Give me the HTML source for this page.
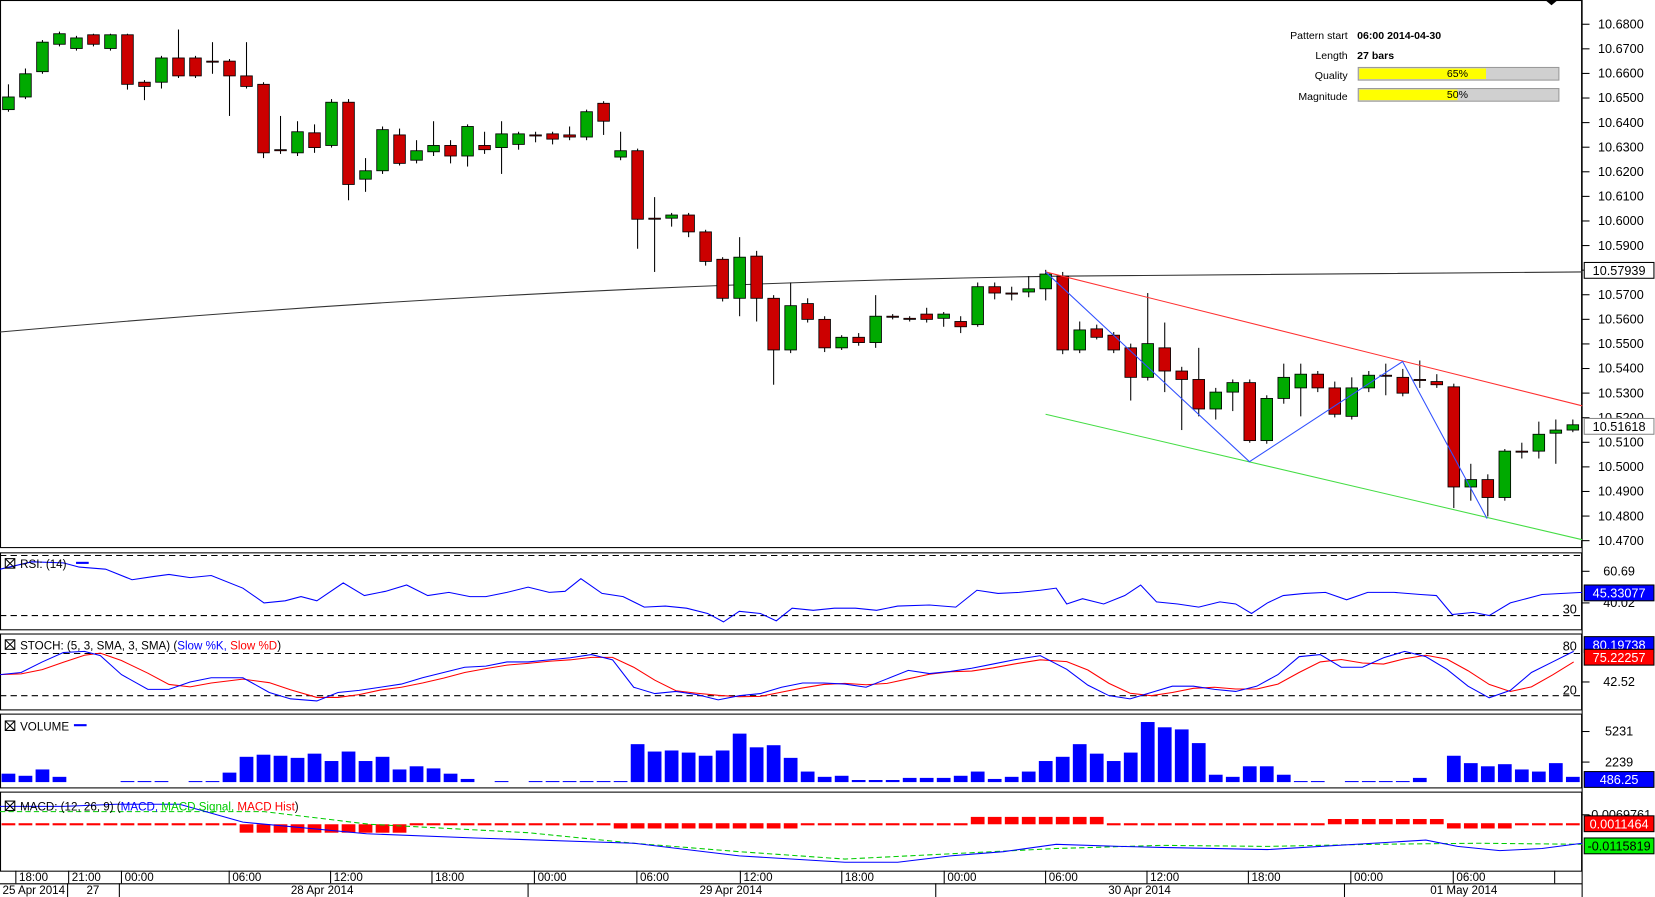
<!DOCTYPE html>
<html><head><meta charset="utf-8">
<style>
html,body{margin:0;padding:0;background:#fff;overflow:hidden}
svg{display:block;font-family:"Liberation Sans",Arial,sans-serif}
</style></head><body>
<svg id="c" width="1655" height="897" viewBox="0 0 1567 851" preserveAspectRatio="none" xmlns="http://www.w3.org/2000/svg">
<rect width="1567" height="851" fill="#fff"/>
<g id="g"></g>
<g font-size="10" fill="#000">
<text x="1276" y="37" text-anchor="end">Pattern start</text><text x="1285" y="37" font-weight="bold">06:00 2014-04-30</text>
<text x="1276" y="56" text-anchor="end">Length</text><text x="1285" y="56" font-weight="bold">27 bars</text>
<text x="1276" y="75" text-anchor="end">Quality</text>
<text x="1276" y="95" text-anchor="end">Magnitude</text>
</g>
<rect x="1286" y="64" width="190" height="12" fill="#d0d0d0" stroke="#999"/>
<rect x="1287" y="65" width="120" height="10" fill="#ffff00"/>
<text x="1380" y="73" font-size="10" text-anchor="middle">65%</text>
<rect x="1286" y="84" width="190" height="12" fill="#d0d0d0" stroke="#999"/>
<rect x="1287" y="85" width="93" height="10" fill="#ffff00"/>
<text x="1380" y="93" font-size="10" text-anchor="middle">50%</text>
<path d="M1463 0 L1475 0 L1469 5Z" fill="#000"/>
</svg>
<script>
const NS="http://www.w3.org/2000/svg",g=document.getElementById('g');
function el(t,a,txt){const e=document.createElementNS(NS,t);for(const k in a)e.setAttribute(k,a[k]);if(txt!=null)e.textContent=txt;g.appendChild(e);return e;}
el('rect',{x:0.5,y:0.5,width:1497,height:519,fill:'none',stroke:'#000'});
[[524,597],[601,673],[677,747],[751,826]].forEach(p=>el('rect',{x:0.5,y:p[0]+.5,width:1497,height:p[1]-p[0],fill:'none',stroke:'#000'}));
el('line',{x1:1498,y1:0,x2:1498,y2:851,stroke:'#000'});
el('line',{x1:0,y1:838.5,x2:1498,y2:838.5,stroke:'#000'});
const pl=["10.6800","10.6700","10.6600","10.6500","10.6400","10.6300","10.6200","10.6100","10.6000","10.5900","10.5800","10.5700","10.5600","10.5500","10.5400","10.5300","10.5200","10.5100","10.5000","10.4900","10.4800","10.4700"];
pl.forEach((t,i)=>{const y=23+i*23.33;el('line',{x1:1498,y1:y,x2:1505,y2:y,stroke:'#000'});el('text',{x:1513,y:y+4,'font-size':12},t);});
function box(y,txt,fill,col,stroke){el('rect',{x:1500,y:y-8,width:66,height:15,fill:fill,stroke:stroke||'#000'});el('text',{x:1533,y:y+4,'font-size':12,'text-anchor':'middle',fill:col},txt);}
box(257,"10.57939","#fff","#000");box(405,"10.51618","#fff","#000","#888");
[[542,"60.69"],[572,"40.02"],[647,"42.52"],[694,"5231"],[723,"2239"],[773,"-0.0069761"]].forEach(a=>{el('line',{x1:1498,y1:a[0],x2:1505,y2:a[0],stroke:'#000'});el('text',{x:1533,y:a[0]+4,'font-size':12,'text-anchor':'middle'},a[1]);});
el('text',{x:1493,y:582,'font-size':12,'text-anchor':'end'},"30");
el('text',{x:1493,y:617,'font-size':12,'text-anchor':'end'},"80");
el('text',{x:1493,y:659,'font-size':12,'text-anchor':'end'},"20");
box(563,"45.33077","#0000ff","#fff");box(612,"80.19738","#0000ff","#fff");box(624,"75.22257","#ff0000","#fff");
box(740,"486.25","#0000ff","#fff");box(782,"0.0011464","#ff0000","#fff");box(803,"-0.0115819","#00ee00","#000");
[527,584,620,660].forEach(y=>el('line',{x1:0,y1:y,x2:1498,y2:y,stroke:'#000','stroke-dasharray':'6,4'}));
el('path',{d:'M0 315 Q500 270 1000 262 L1498 258',fill:'none',stroke:'#333','stroke-width':1});
const C=[[92,104,80,106,1],[70,92,65,94,1],[40,68,38,70,1],[32,42,30,44,1],[36,46,34,48,1],[33,42,32,44,0],[33,46,32,48,1],[33,80,32,85,0],[78,82,76,95,0],[55,78,53,84,1],[55,72,28,74,0],[55,72,53,74,0],[58,58,40,70,0],[58,72,56,110,0],[72,82,40,84,0],[80,145,78,150,0],[142,142,110,146,0],[125,145,115,148,1],[126,140,118,145,0],[97,138,94,140,1],[97,175,94,190,0],[162,170,150,182,1],[123,162,120,165,1],[128,155,122,157,0],[143,152,133,155,1],[138,144,115,148,1],[138,148,133,155,0],[120,148,118,158,1],[138,142,125,146,0],[127,140,115,165,1],[127,137,125,142,1],[128,128,125,135,0],[127,132,125,137,0],[128,130,120,133,0],[106,130,104,133,1],[98,115,96,128,0],[143,149,125,152,1],[143,208,141,236,0],[207,207,187,258,0],[204,207,202,215,1],[204,220,202,225,0],[220,248,218,252,0],[246,283,244,286,0],[244,283,225,300,1],[243,283,238,305,0],[283,332,280,365,0],[290,332,268,335,1],[288,303,283,306,0],[303,330,300,334,0],[320,330,318,332,1],[320,325,316,328,0],[300,325,280,330,1],[300,300,298,303,0],[302,302,300,305,0],[298,303,292,306,0],[298,302,296,310,1],[305,310,300,316,0],[272,308,268,310,1],[272,278,268,284,0],[278,278,272,285,0],[274,277,262,282,1],[260,274,256,285,1],[262,332,258,336,0],[313,332,305,335,1],[312,320,308,322,0],[318,332,315,335,0],[330,358,326,380,0],[326,358,278,361,1],[330,352,306,372,0],[352,360,348,408,0],[360,388,330,395,0],[372,388,368,398,1],[363,372,360,390,1],[363,418,360,420,0],[378,418,375,421,1],[358,378,345,383,1],[355,368,345,395,1],[355,368,352,372,0],[368,393,362,396,0],[368,395,358,398,1],[356,368,352,372,1],[356,356,345,375,0],[358,373,350,376,0],[360,360,342,368,0],[362,365,355,368,0],[367,462,364,482,0],[455,462,440,475,1],[455,472,450,490,0],[428,472,426,475,1],[428,428,420,435,0],[412,428,400,435,1],[408,411,398,440,1],[403,408,398,410,1]];
const xs=i=>8+i*16.1;
C.forEach((c,i)=>{const x=xs(i);el('line',{x1:x,y1:c[2],x2:x,y2:c[3],stroke:'#000'});const t=Math.min(c[0],c[1]),h=Math.max(1,Math.abs(c[1]-c[0]));el('rect',{x:x-5.5,y:t,width:11,height:h,fill:c[4]?'#00aa00':'#cc0000',stroke:'#000','stroke-width':0.8});});
el('line',{x1:990,y1:258,x2:1498,y2:385,stroke:'#ff3030'});
el('line',{x1:990,y1:393,x2:1498,y2:512,stroke:'#44dd44'});
el('polyline',{points:'990,258 1183,438 1328,343 1408,492',fill:'none',stroke:'#3050ff'});
const rsi=[0,540,30,533,60,534,75,538,100,540,125,550,145,547,160,545,180,548,200,546,230,558,250,572,270,570,285,566,300,570,325,553,345,565,365,561,385,555,405,565,425,562,445,566,460,566,480,562,500,557,520,562,535,561,550,549,570,563,590,566,610,576,630,575,650,577,670,582,685,590,700,580,720,582,735,589,750,577,770,579,790,577,810,577,830,579,850,575,880,574,905,576,925,560,945,563,965,562,985,560,1000,558,1010,573,1025,568,1045,573,1065,565,1080,555,1095,571,1115,573,1135,576,1155,571,1170,573,1185,582,1200,572,1215,565,1235,563,1255,562,1275,569,1295,562,1320,562,1345,564,1360,565,1375,583,1395,581,1410,584,1430,572,1460,564,1498,562];
const pts=a=>{let s='';for(let i=0;i<a.length;i+=2)s+=a[i]+','+a[i+1]+' ';return s;};
el('polyline',{points:pts(rsi),fill:'none',stroke:'#0000ff'});
const K=[0,640,20,638,40,628,60,619,80,618,95,622,115,640,140,654,160,654,180,647,200,643,230,643,255,657,275,663,300,665,320,657,340,655,360,652,380,649,400,643,420,638,440,633,460,632,480,628,500,628,520,626,540,624,560,621,580,626,600,652,620,658,640,656,660,659,680,664,700,660,720,658,740,652,760,648,780,648,800,649,820,652,840,644,860,636,880,639,900,637,920,634,940,630,960,626,985,622,1010,635,1030,650,1050,660,1070,663,1090,657,1110,651,1130,651,1150,654,1170,656,1190,651,1210,640,1230,623,1250,621,1270,633,1290,633,1310,624,1330,618,1350,623,1370,635,1390,651,1410,662,1430,655,1450,638,1470,628,1490,618];
const D=[];for(let i=0;i<K.length;i+=2){const j=Math.max(0,i-2),k=Math.max(0,i-4);D.push(K[i],(K[i+1]+K[j+1]+K[k+1])/3);}
el('polyline',{points:pts(D),fill:'none',stroke:'#ff0000'});
el('polyline',{points:pts(K),fill:'none',stroke:'#0000ff'});
const V=[8,6,12,5,0,0,0,1,1,1,0,1,1,9,24,26,25,23,27,20,29,20,24,12,15,13,8,3,0,1,0,1,1,1,1,1,1,36,29,30,28,25,30,46,33,35,23,10,5,6,2,2,2,4,4,4,6,10,3,5,10,20,24,36,27,20,28,57,52,50,37,7,5,15,15,7,1,1,0,1,1,1,1,4,0,25,18,15,17,12,10,18,5];
C.forEach((c,i)=>{const h=V[i]||0;if(h>0)el('rect',{x:xs(i)-6.5,y:742-h,width:13,height:h,fill:'#0000ff'});});
C.forEach((c,i)=>{const x=xs(i);let t=781,h=2;
 if(x>230&&x<380){t=782;h=8;} else if(x>580&&x<760){t=781;h=5;} else if(x>910&&x<1050){t=775;h=7;} else if(x>1250&&x<1370){t=777;h=5;} else if(x>1370&&x<1440){t=781;h=5;}
 el('rect',{x:x-6.5,y:t,width:13,height:h,fill:'#ff0000'});});
el('polyline',{points:'0,770 250,770 350,782 500,790 600,800 700,808 800,815 900,810 1000,805 1100,802 1200,803 1300,801 1400,800 1498,801',fill:'none',stroke:'#00cc00','stroke-dasharray':'5,3'});
el('polyline',{points:'0,765 60,765 110,763 170,763 230,780 347,791 450,795 600,800 700,812 800,818 850,818 900,812 950,808 1000,801 1060,803 1100,804 1200,806 1300,800 1350,797 1380,803 1420,807 1460,805 1498,800',fill:'none',stroke:'#0000ff'});
function ttl(y,parts){el('rect',{x:5,y:y-9,width:9,height:9,fill:'none',stroke:'#000'});el('path',{d:`M5 ${y-9}l9 9M14 ${y-9}l-9 9`,stroke:'#000'});const t=el('text',{x:19,y:y,'font-size':11});parts.forEach(p=>{const s=document.createElementNS(NS,'tspan');s.setAttribute('fill',p[1]);s.textContent=p[0];t.appendChild(s);});}
ttl(539,[["RSI: (14)","#000"]]);
el('line',{x1:72,y1:534,x2:84,y2:534,stroke:'#0000ff','stroke-width':2});
ttl(616,[["STOCH: (5, 3, SMA, 3, SMA) (","#000"],["Slow %K, ","#0000ff"],["Slow %D","#ff0000"],[")","#000"]]);
ttl(693,[["VOLUME ","#000"]]);
el('line',{x1:70,y1:688,x2:82,y2:688,stroke:'#0000ff','stroke-width':2});
ttl(769,[["MACD: (12, 26, 9) (","#000"],["MACD, ","#0000ff"],["MACD Signal, ","#00cc00"],["MACD Hist","#ff0000"],[")","#000"]]);
[[18,"18:00"],[68,"21:00"],[118,"00:00"],[220,"06:00"],[316,"12:00"],[412,"18:00"],[509,"00:00"],[606,"06:00"],[704,"12:00"],[800,"18:00"],[897,"00:00"],[993,"06:00"],[1089,"12:00"],[1185,"18:00"],[1282,"00:00"],[1379,"06:00"],[1475,""]].forEach(a=>{el('line',{x1:a[0]-3,y1:826,x2:a[0]-3,y2:838,stroke:'#000'});el('text',{x:a[0],y:836,'font-size':11},a[1]);});
[[64,32,"25 Apr 2014"],[113,88,"27"],[500,305,"28 Apr 2014"],[886,692,"29 Apr 2014"],[1273,1079,"30 Apr 2014"],[0,1386,"01 May 2014"]].forEach(a=>{if(a[0])el('line',{x1:a[0],y1:838,x2:a[0],y2:851,stroke:'#000'});el('text',{x:a[1],y:848,'font-size':11,'text-anchor':'middle'},a[2]);});
</script>
</body></html>
